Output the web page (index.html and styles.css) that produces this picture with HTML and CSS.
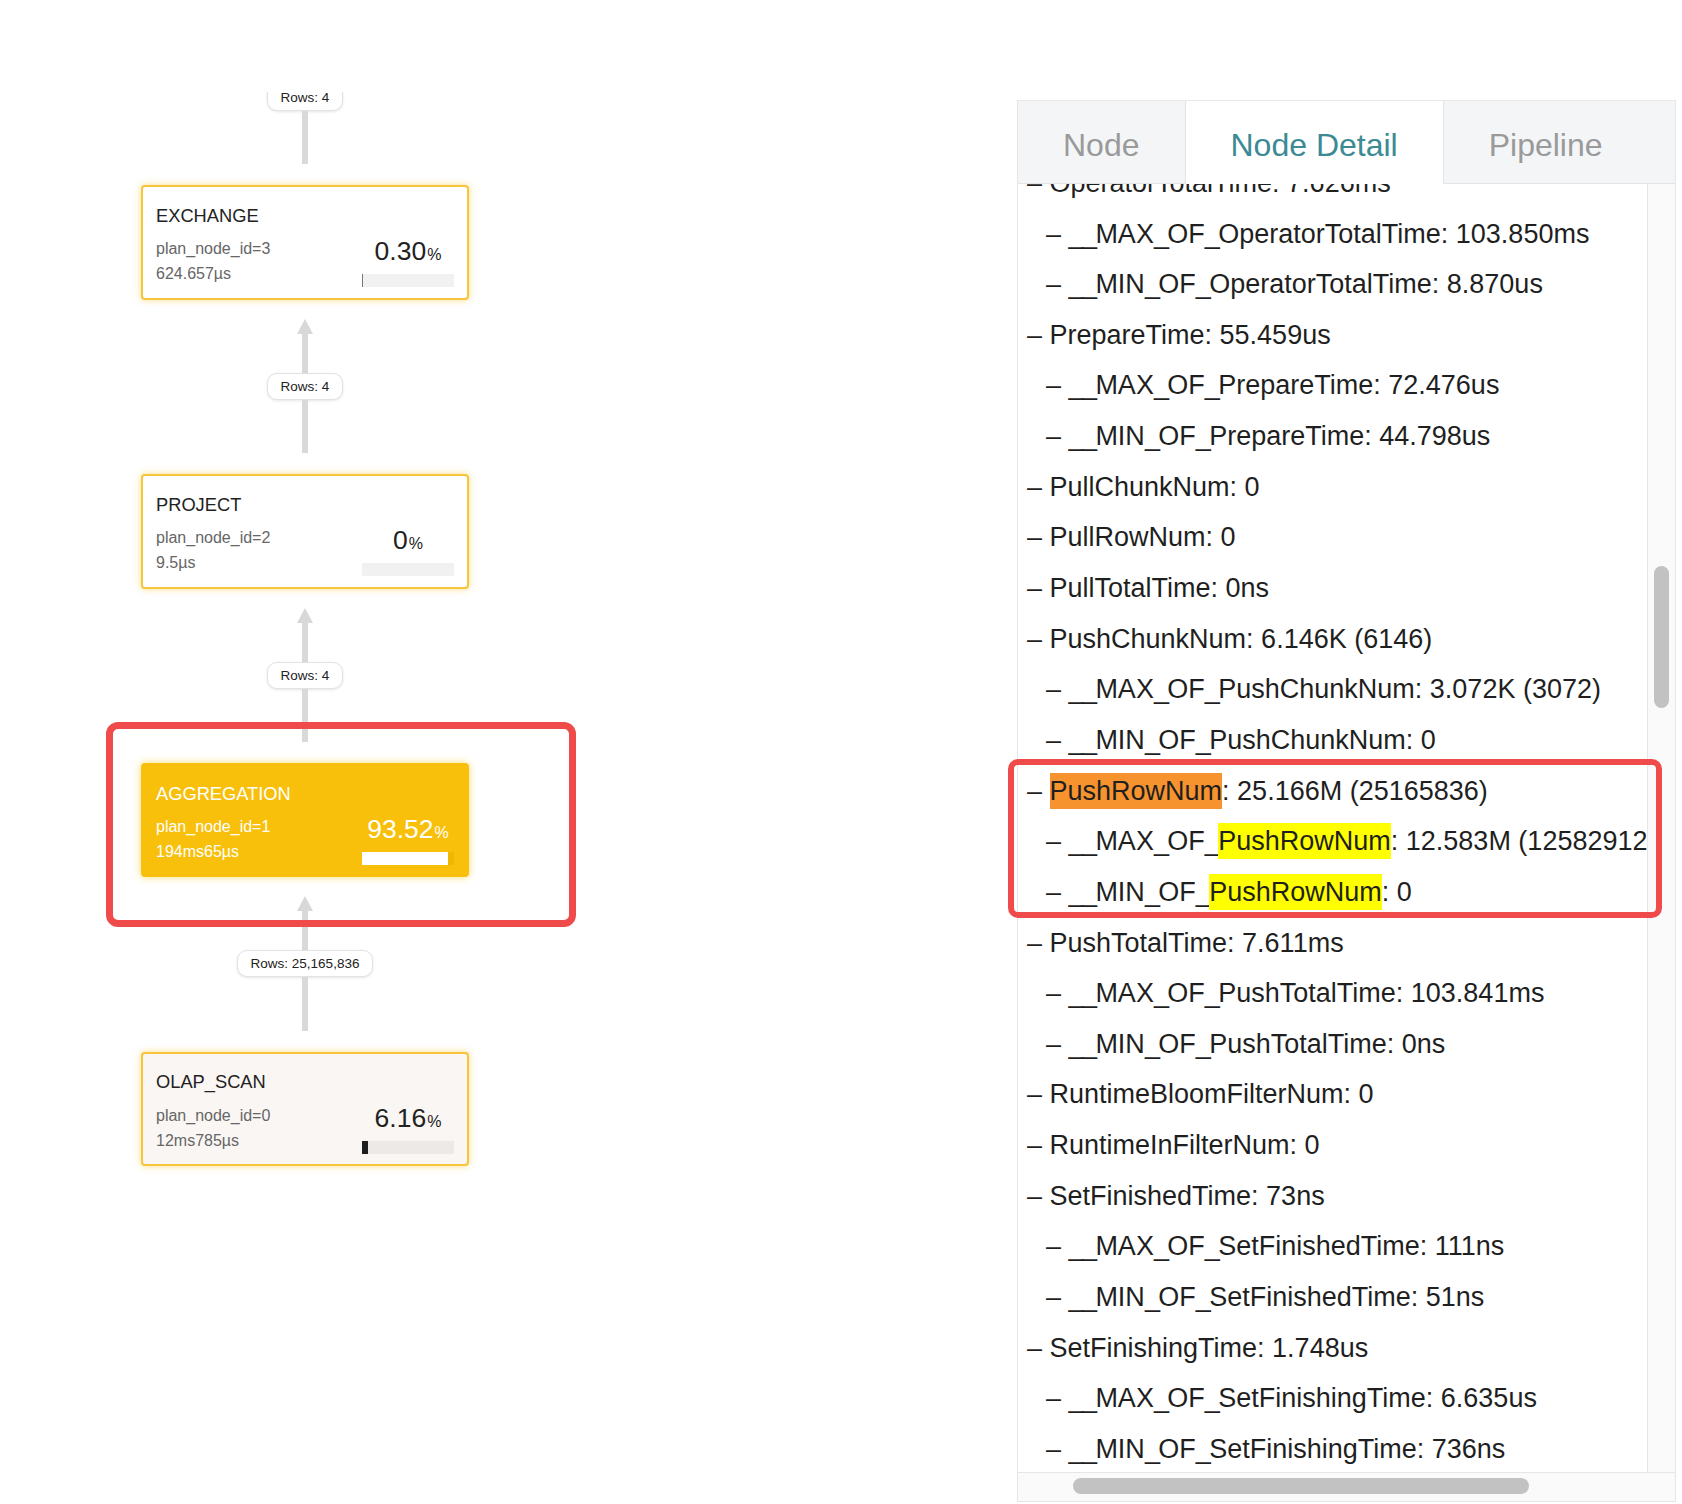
FILE: index.html
```html
<!DOCTYPE html>
<html lang="en">
<head>
<meta charset="utf-8">
<title>Query Profile</title>
<link rel="stylesheet" href="styles.css">
</head>
<body>
<div class="page">
  <section class="graph-pane">
    <div class="graph-clip">
      <div class="graph">
        <div class="edge edge-top">
          <div class="arrow"></div><div class="line"></div><div class="pill">Rows: 4</div><div class="line grow"></div>
        </div>
        <div class="node">
          <div class="node-title">EXCHANGE</div>
          <div class="node-row">
            <div class="node-meta"><div>plan_node_id=3</div><div>624.657µs</div></div>
            <div class="node-stat">
              <div class="pct">0.30<span class="pct-sign">%</span></div>
              <div class="bar"><div class="fill fill-min" style="width:0.30%"></div></div>
            </div>
          </div>
        </div>
        <div class="edge">
          <div class="arrow"></div><div class="line"></div><div class="pill">Rows: 4</div><div class="line grow"></div>
        </div>
        <div class="node">
          <div class="node-title">PROJECT</div>
          <div class="node-row">
            <div class="node-meta"><div>plan_node_id=2</div><div>9.5µs</div></div>
            <div class="node-stat">
              <div class="pct">0<span class="pct-sign">%</span></div>
              <div class="bar"></div>
            </div>
          </div>
        </div>
        <div class="edge">
          <div class="arrow"></div><div class="line"></div><div class="pill">Rows: 4</div><div class="line grow"></div>
        </div>
        <div class="node node-hot">
          <div class="node-title">AGGREGATION</div>
          <div class="node-row">
            <div class="node-meta"><div>plan_node_id=1</div><div>194ms65µs</div></div>
            <div class="node-stat">
              <div class="pct">93.52<span class="pct-sign">%</span></div>
              <div class="bar"><div class="fill" style="width:93.52%"></div></div>
            </div>
          </div>
        </div>
        <div class="edge">
          <div class="arrow"></div><div class="line"></div><div class="pill">Rows: 25,165,836</div><div class="line grow"></div>
        </div>
        <div class="node node-scan">
          <div class="node-title">OLAP_SCAN</div>
          <div class="node-row">
            <div class="node-meta"><div>plan_node_id=0</div><div>12ms785µs</div></div>
            <div class="node-stat">
              <div class="pct">6.16<span class="pct-sign">%</span></div>
              <div class="bar"><div class="fill" style="width:6.16%"></div></div>
            </div>
          </div>
        </div>
      </div>
    </div>
  </section>

  <section class="panel">
    <div class="tabs">
      <div class="tab">Node</div>
      <div class="tab active">Node Detail</div>
      <div class="tab tab-last">Pipeline</div>
    </div>
    <div class="detail">
      <div class="detail-view">
        <ul class="lines">
          <li class="l1">– OperatorTotalTime: 7.626ms</li>
          <li class="l2">– <span class="u">__</span>MAX<span class="u">_</span>OF<span class="u">_</span>OperatorTotalTime: 103.850ms</li>
          <li class="l2">– <span class="u">__</span>MIN<span class="u">_</span>OF<span class="u">_</span>OperatorTotalTime: 8.870us</li>
          <li class="l1">– PrepareTime: 55.459us</li>
          <li class="l2">– <span class="u">__</span>MAX<span class="u">_</span>OF<span class="u">_</span>PrepareTime: 72.476us</li>
          <li class="l2">– <span class="u">__</span>MIN<span class="u">_</span>OF<span class="u">_</span>PrepareTime: 44.798us</li>
          <li class="l1">– PullChunkNum: 0</li>
          <li class="l1">– PullRowNum: 0</li>
          <li class="l1">– PullTotalTime: 0ns</li>
          <li class="l1">– PushChunkNum: 6.146K (6146)</li>
          <li class="l2">– <span class="u">__</span>MAX<span class="u">_</span>OF<span class="u">_</span>PushChunkNum: 3.072K (3072)</li>
          <li class="l2">– <span class="u">__</span>MIN<span class="u">_</span>OF<span class="u">_</span>PushChunkNum: 0</li>
          <li class="l1">– <mark class="hl-main">PushRowNum</mark>: 25.166M (25165836)</li>
          <li class="l2">– <span class="u">__</span>MAX<span class="u">_</span>OF<span class="u">_</span><mark class="hl-sub">PushRowNum</mark>: 12.583M (12582912)</li>
          <li class="l2">– <span class="u">__</span>MIN<span class="u">_</span>OF<span class="u">_</span><mark class="hl-sub">PushRowNum</mark>: 0</li>
          <li class="l1">– PushTotalTime: 7.611ms</li>
          <li class="l2">– <span class="u">__</span>MAX<span class="u">_</span>OF<span class="u">_</span>PushTotalTime: 103.841ms</li>
          <li class="l2">– <span class="u">__</span>MIN<span class="u">_</span>OF<span class="u">_</span>PushTotalTime: 0ns</li>
          <li class="l1">– RuntimeBloomFilterNum: 0</li>
          <li class="l1">– RuntimeInFilterNum: 0</li>
          <li class="l1">– SetFinishedTime: 73ns</li>
          <li class="l2">– <span class="u">__</span>MAX<span class="u">_</span>OF<span class="u">_</span>SetFinishedTime: 111ns</li>
          <li class="l2">– <span class="u">__</span>MIN<span class="u">_</span>OF<span class="u">_</span>SetFinishedTime: 51ns</li>
          <li class="l1">– SetFinishingTime: 1.748us</li>
          <li class="l2">– <span class="u">__</span>MAX<span class="u">_</span>OF<span class="u">_</span>SetFinishingTime: 6.635us</li>
          <li class="l2">– <span class="u">__</span>MIN<span class="u">_</span>OF<span class="u">_</span>SetFinishingTime: 736ns</li>
          <li class="l1">– UnitTime: 0ns</li>
        </ul>
      </div>
      <div class="vtrack"><div class="vthumb"></div></div>
      <div class="htrack"><div class="hthumb"></div></div>
    </div>
  </section>

  <div class="annot annot-left"></div>
  <div class="annot annot-right"></div>
</div>
</body>
</html>
```

FILE: styles.css
```css
* { box-sizing: border-box; }

html, body {
  margin: 0;
  padding: 0;
  background: #ffffff;
}

body {
  font-family: "Liberation Sans", Arial, "Noto Sans CJK SC", sans-serif;
  color: #222222;
}

.page {
  position: relative;
  display: flex;
  width: 1682px;
  height: 1504px;
  overflow: hidden;
}

/* ---------- graph ---------- */
.graph-pane {
  width: 1017px;
  flex: none;
  padding-top: 92px;
}

.graph-clip {
  height: 1412px;
  overflow: hidden;
}

.graph {
  width: 328px;
  margin-left: 141px;
  display: flex;
  flex-direction: column;
  align-items: center;
}

.edge {
  height: 174.3px;
  width: 100%;
  display: flex;
  flex-direction: column;
  align-items: center;
  padding-top: 19px;
  padding-bottom: 21px;
}

.edge-top {
  margin-top: -81px;
}

.arrow {
  width: 0;
  height: 0;
  border-left: 8.5px solid transparent;
  border-right: 8.5px solid transparent;
  border-bottom: 15px solid #d8d8d8;
  flex: none;
}

.line {
  width: 6px;
  height: 39px;
  background: #d9d9d9;
  flex: none;
}

.line.grow {
  flex: 1 1 auto;
  height: auto;
}

.pill {
  flex: none;
  height: 27px;
  padding: 0 13px;
  border: 1px solid #e2e2e2;
  border-radius: 10px;
  background: #ffffff;
  box-shadow: 0 1px 3px rgba(0, 0, 0, 0.10);
  font-size: 13.5px;
  line-height: 25px;
  color: #222222;
  white-space: nowrap;
}

.node {
  width: 328px;
  height: 114.5px;
  flex: none;
  border: 2px solid #f6c53c;
  border-radius: 4px;
  background: #ffffff;
  box-shadow: 0 0 7px rgba(246, 190, 20, 0.5);
  padding: 17.8px 13px 0 13px;
}

.node-title {
  font-size: 18.3px;
  line-height: 22px;
  color: #222222;
  white-space: nowrap;
}

.node-row {
  display: flex;
  justify-content: space-between;
  margin-top: 9.3px;
}

.node-meta {
  font-size: 16px;
  line-height: 25px;
  color: #666666;
  white-space: nowrap;
}

.node-stat {
  width: 92px;
  display: flex;
  flex-direction: column;
}

.pct {
  font-size: 26.5px;
  line-height: 30px;
  text-align: center;
  color: #222222;
  white-space: nowrap;
}

.pct-sign {
  font-size: 16px;
  margin-left: 1px;
}

.bar {
  margin-top: 4px;
  height: 13px;
  background: #f1f1f1;
  display: flex;
}

.fill {
  height: 100%;
  background: #222222;
}

.fill-min {
  min-width: 1px;
  background: #777777;
}

.node-hot {
  background: #f8c00b;
  border-color: #f8c00b;
  box-shadow: 0 0 8px rgba(248, 192, 11, 0.55);
}

.node-hot .node-title,
.node-hot .node-meta,
.node-hot .pct {
  color: #ffffff;
}

.node-hot .bar {
  background: #eeb800;
}

.node-hot .fill {
  background: #ffffff;
}

.node-scan {
  background: #faf6f4;
}

.node-scan .bar {
  background: #ece9e7;
}

.node-scan .fill {
  background: #1e1e1e;
}

/* ---------- panel ---------- */
.panel {
  width: 659px;
  height: 1402px;
  flex: none;
  margin-top: 100px;
  border-left: 1px solid #e6e6e6;
  border-right: 1px solid #e6e6e6;
  border-bottom: 1px solid #e6e6e6;
  display: flex;
  flex-direction: column;
}

.tabs {
  height: 84px;
  flex: none;
  display: flex;
  border-top: 1px solid #e8e8e8;
  background: #f4f5f7;
}

.tab {
  flex: none;
  padding: 6px 45px 0 45px;
  font-size: 32px;
  line-height: 76px;
  color: #9a9a9a;
  border-right: 1px solid #e4e4e4;
  border-bottom: 1px solid #e4e4e4;
  white-space: nowrap;
}

.tab.active {
  background: #ffffff;
  color: #3b8a94;
  border-bottom-color: transparent;
}

.tab.tab-last {
  flex: 1;
  border-right: none;
}

.detail {
  flex: 1;
  display: grid;
  grid-template-columns: 1fr 28px;
  grid-template-rows: 1fr 29px;
  min-height: 0;
}

.detail-view {
  overflow: hidden;
  background: #ffffff;
  padding-left: 9px;
}

.lines {
  list-style: none;
  margin: -26.1px 0 0 0;
  padding: 0;
  font-size: 27px;
  line-height: 50.64px;
  color: #1f1f1f;
  white-space: nowrap;
}

.lines .l2 {
  padding-left: 19px;
}

.u {
  letter-spacing: -1.6px;
}

mark {
  padding: 3px 0;
  color: inherit;
}

.hl-main {
  background: #f7932f;
}

.hl-sub {
  background: #ffff00;
}

.vtrack {
  background: #fafafa;
  border-left: 1px solid #e6e6e6;
  padding-left: 6px;
}

.vthumb {
  width: 15px;
  height: 142px;
  margin-top: 382px;
  border-radius: 8px;
  background: #c2c2c2;
}

.htrack {
  grid-column: 1 / 3;
  background: #fafafa;
  border-top: 1px solid #e6e6e6;
  padding-left: 55px;
  padding-top: 5px;
}

.hthumb {
  width: 456px;
  height: 16px;
  border-radius: 8px;
  background: #c2c2c2;
}

/* ---------- annotations ---------- */
.annot {
  position: absolute;
  border: solid #ef4b4b;
  pointer-events: none;
}

.annot-left {
  left: 106px;
  top: 722px;
  width: 470px;
  height: 205px;
  border-width: 7px;
  border-radius: 12px;
}

.annot-right {
  left: 1008px;
  top: 759px;
  width: 654px;
  height: 159px;
  border-width: 6px;
  border-radius: 10px;
}
```
